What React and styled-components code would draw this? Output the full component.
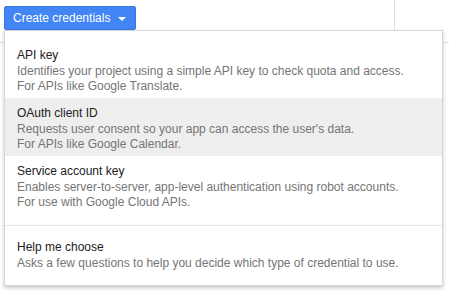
import React from "react";
import styled, { createGlobalStyle } from "styled-components";

const GlobalStyle = createGlobalStyle`
  html, body { margin: 0; padding: 0; background: #fff; }
  body { font-family: "Liberation Sans", Arial, Helvetica, sans-serif; }
  * { box-sizing: border-box; }
`;

const Page = styled.div`
  position: relative;
  width: 449px;
  height: 291px;
  overflow: hidden;
  background: #fff;
`;

const Toolbar = styled.div`
  display: flex;
  align-items: flex-start;
  width: 395px;
  height: 30px;
  padding: 6px 0 0 4px;
  border-right: 1px solid #e0e0e0;
`;

const Content = styled.div`
  margin-top: 12px;
  border-top: 1px solid #e0e0e0;
  height: 40px;
`;

const DropdownAnchor = styled.div`
  position: relative;
`;

const Button = styled.button`
  display: flex;
  align-items: center;
  gap: 8px;
  height: 24px;
  padding: 0 9px 0 8px;
  border: 1px solid #3b78e7;
  border-radius: 2px;
  background: #4285f4;
  color: #fff;
  font-family: "Liberation Sans", Arial, sans-serif;
  font-size: 12px;
  cursor: pointer;
`;

const Caret = styled.span`
  width: 0;
  height: 0;
  border-left: 4px solid transparent;
  border-right: 4px solid transparent;
  border-top: 4px solid #fff;
  margin-top: 1px;
`;

const Menu = styled.div`
  position: absolute;
  top: 100%;
  left: 0;
  width: 439px;
  padding: 9px 0 9px;
  background: #fff;
  border: 1px solid #d6d6d6;
  box-shadow: 0 2px 4px rgba(0, 0, 0, 0.22);
  z-index: 10;
`;

const Item = styled.div`
  padding: 7px 12px 5px;
  background: ${(p) => (p.$active ? "#eeeeee" : "transparent")};
  cursor: pointer;
`;

const Title = styled.div`
  font-size: 12px;
  line-height: 17px;
  color: #212121;
`;

const Desc = styled.div`
  font-size: 12px;
  line-height: 14.5px;
  color: #757575;
`;

const Separator = styled.div`
  height: 1px;
  background: #e5e5e5;
  margin: 11px 0 6px;
`;

const items = [
  {
    title: "API key",
    lines: [
      "Identifies your project using a simple API key to check quota and access.",
      "For APIs like Google Translate.",
    ],
  },
  {
    title: "OAuth client ID",
    lines: [
      "Requests user consent so your app can access the user's data.",
      "For APIs like Google Calendar.",
    ],
    active: true,
  },
  {
    title: "Service account key",
    lines: [
      "Enables server-to-server, app-level authentication using robot accounts.",
      "For use with Google Cloud APIs.",
    ],
  },
];

export default function App() {
  return (
    <>
      <GlobalStyle />
      <Page>
        <Toolbar>
          <DropdownAnchor>
            <Button>
              Create credentials
              <Caret />
            </Button>
            <Menu>
              {items.map((it) => (
                <Item key={it.title} $active={it.active}>
                  <Title>{it.title}</Title>
                  {it.lines.map((l) => (
                    <Desc key={l}>{l}</Desc>
                  ))}
                </Item>
              ))}
              <Separator />
              <Item>
                <Title>Help me choose</Title>
                <Desc>Asks a few questions to help you decide which type of credential to use.</Desc>
              </Item>
            </Menu>
          </DropdownAnchor>
        </Toolbar>
        <Content />
      </Page>
    </>
  );
}
